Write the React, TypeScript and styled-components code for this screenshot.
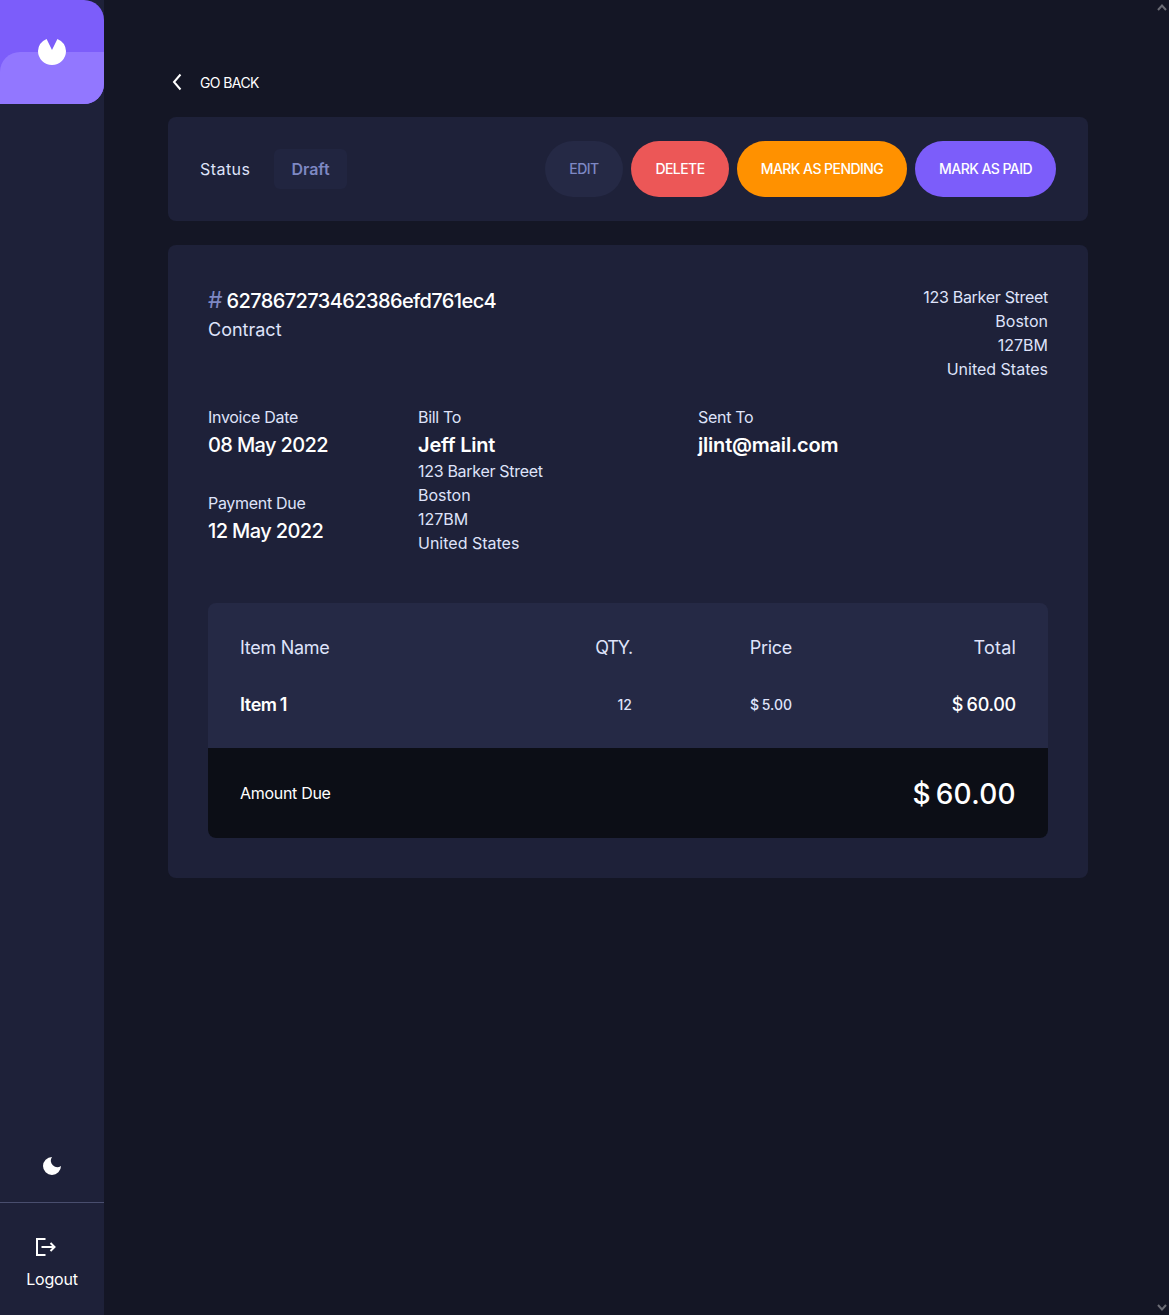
import styled, { createGlobalStyle } from 'styled-components';

const GlobalStyle = createGlobalStyle`
  html, body {
    margin: 0;
    height: 100%;
    background: #141625;
    font-family: 'Inter', 'Noto Sans', sans-serif;
    overflow: hidden;
  }
  * {
    box-sizing: border-box;
  }
`;

const Page = styled.div`
  display: flex;
  height: 1315px;
  width: 100%;
  background: #141625;
`;

const Sidebar = styled.aside`
  width: 104px;
  flex-shrink: 0;
  display: flex;
  flex-direction: column;
  background: #1e2139;
`;

const Logo = styled.div`
  position: relative;
  height: 104px;
  display: flex;
  align-items: center;
  justify-content: center;
  background: #7c5dfa;
  border-radius: 0 20px 20px 0;
  overflow: hidden;

  &::after {
    content: '';
    position: absolute;
    left: 0;
    right: 0;
    bottom: 0;
    height: 52px;
    background: #9277ff;
    border-radius: 20px 0 0 0;
  }

  svg {
    position: relative;
    z-index: 1;
  }
`;

const SidebarBottom = styled.div`
  margin-top: auto;
  display: flex;
  flex-direction: column;
`;

const ThemeButton = styled.div`
  height: 73px;
  display: flex;
  align-items: center;
  justify-content: center;
  padding-bottom: 1px;
  border-bottom: 1px solid #494e6e;
`;

const LogoutButton = styled.div`
  height: 112px;
  display: flex;
  flex-direction: column;
  align-items: center;
  padding-top: 35px;
  color: #fff;
  font-size: 16px;
  letter-spacing: -0.2px;

  svg {
    margin: 0 12px 13px 0;
  }
`;

const Main = styled.main`
  flex: 1;
  padding: 71px 81px 0 64px;
`;

const BackLink = styled.div`
  height: 22px;
  display: flex;
  align-items: center;
  gap: 15px;
  margin-bottom: 24px;
  color: #fff;
  font-size: 14px;
  letter-spacing: -0.6px;

  svg {
    margin-left: 3px;
  }
`;

const Panel = styled.section`
  background: #1e2139;
  border-radius: 8px;
`;

const StatusBar = styled(Panel)`
  height: 104px;
  display: flex;
  align-items: center;
  padding: 0 32px;
  margin-bottom: 24px;
`;

const StatusLabel = styled.span`
  width: 74px;
  color: #dfe3fa;
  font-size: 16px;
  letter-spacing: 0.45px;
`;

const StatusBadge = styled.span`
  width: 73px;
  height: 40px;
  display: flex;
  align-items: center;
  justify-content: center;
  border-radius: 6px;
  background: #212540;
  color: #7e88c3;
  font-size: 16px;
  font-weight: 600;
`;

const Actions = styled.div`
  margin-left: auto;
  display: flex;
  gap: 8px;
`;

const Action = styled.button<{ $bg: string; $fg?: string; $w: number }>`
  width: ${(p) => p.$w}px;
  height: 56px;
  border: 0;
  border-radius: 28px;
  padding: 0 0 1px;
  background: ${(p) => p.$bg};
  color: ${(p) => p.$fg || '#fff'};
  font-family: inherit;
  font-size: 14px;
  font-weight: 500;
  letter-spacing: -0.55px;
`;

const InvoiceCard = styled(Panel)`
  height: 633px;
  padding: 40px;
`;

const TopRow = styled.div`
  display: flex;
  justify-content: space-between;
  margin-bottom: 24px;
`;

const InvoiceId = styled.div`
  color: #fff;
  font-size: 20px;
  line-height: 32px;
  font-weight: 500;
  letter-spacing: -0.6px;

  span {
    display: inline-block;
    width: 18.5px;
    color: #7e88c3;
    font-size: 23px;
    line-height: 1;
    font-weight: 400;
    letter-spacing: 0;
  }
`;

const Muted = styled.div<{ $size?: number }>`
  color: #dfe3fa;
  font-size: ${(p) => p.$size || 16}px;
  line-height: 24px;
  letter-spacing: -0.3px;
`;

const WideLine = styled(Muted)`
  letter-spacing: 0;
`;

const ContractType = styled(Muted)`
  font-size: 18px;
  margin-top: 1px;
  letter-spacing: 0;
`;

const Address = styled.div`
  text-align: right;
`;

const Details = styled.div`
  display: grid;
  grid-template-columns: 210px 280px 1fr;
  height: 198px;
`;

const DetailGroup = styled.div`
  margin-bottom: 32px;
`;

const Strong = styled.div`
  color: #fff;
  font-size: 20px;
  line-height: 30px;
  padding-top: 1px;
  margin-bottom: -1px;
  font-weight: 600;
  letter-spacing: -0.2px;
`;

const DateValue = styled(Strong)`
  font-weight: 500;
  letter-spacing: -0.62px;
`;

const ItemsBox = styled.div`
  border-radius: 8px;
  overflow: hidden;
  background: #252945;
`;

const Items = styled.div`
  display: grid;
  grid-template-columns: 1fr 120px 160px 224px;
  padding: 33px 32px 0;
  height: 145px;
  align-content: start;
`;

const Heading = styled.div<{ $right?: boolean; $ls?: number }>`
  color: #dfe3fa;
  font-size: 18px;
  line-height: 24px;
  letter-spacing: ${(p) => (p.$ls !== undefined ? p.$ls : -0.3)}px;
  text-align: ${(p) => (p.$right ? 'right' : 'left')};
  margin-bottom: 33px;
`;

const Cell = styled.div<{ $size: number; $color?: string; $ls?: number }>`
  color: ${(p) => p.$color || '#dfe3fa'};
  font-size: ${(p) => p.$size}px;
  line-height: 24px;
  font-weight: 500;
  text-align: right;
  letter-spacing: ${(p) => p.$ls || 0}px;
  word-spacing: -1px;
`;

const ItemName = styled(Cell)`
  text-align: left;
  font-weight: 600;
  letter-spacing: -0.4px;
`;

const AmountBar = styled.div`
  height: 90px;
  display: flex;
  align-items: center;
  justify-content: space-between;
  padding: 0 32px;
  background: #0c0e16;
  color: #fff;
`;

const AmountLabel = styled.span`
  font-size: 16px;
  letter-spacing: -0.3px;
`;

const AmountValue = styled.span`
  padding-top: 2px;
  font-size: 28px;
  font-weight: 500;
  letter-spacing: 0.3px;
  word-spacing: -3px;
`;

const ScrollArrow = styled.svg<{ $bottom?: boolean }>`
  position: fixed;
  right: 2px;
  ${(p) => (p.$bottom ? 'bottom: 4px;' : 'top: 4px;')}
`;

const App = () => {
  return (
    <Page>
      <GlobalStyle />
      <Sidebar>
        <Logo>
          <svg width="28" height="26" viewBox="0 0 28 26">
            <path d="M8.6 0.1 L14 11 L19.4 0.1 A14 14 0 0 1 28 12 A14 14 0 0 1 0 12 A14 14 0 0 1 8.6 0.1 Z" fill="#fff" />
          </svg>
        </Logo>
        <SidebarBottom>
          <ThemeButton>
            <svg width="20" height="20" viewBox="0 0 20 20">
              <path d="M10 1A9 9 0 1 0 19 10 6.5 6.5 0 0 1 10 1Z" fill="#fff" />
            </svg>
          </ThemeButton>
          <LogoutButton>
            <svg width="20" height="18" viewBox="0 0 20 18" fill="none" stroke="#fff" strokeWidth="2">
              <path d="M9.5 1H1v16h8.5" />
              <path d="M5.5 9h13M14.5 5l4 4-4 4" />
            </svg>
            Logout
          </LogoutButton>
        </SidebarBottom>
      </Sidebar>
      <Main>
        <BackLink>
          <svg width="14" height="18" viewBox="0 0 14 18" fill="none" stroke="#fff" strokeWidth="2">
            <path d="M9.5 1.5 3 9l6.5 7.5" />
          </svg>
          GO BACK
        </BackLink>
        <StatusBar>
          <StatusLabel>Status</StatusLabel>
          <StatusBadge>Draft</StatusBadge>
          <Actions>
            <Action $bg="#252945" $fg="#7e88c3" $w={78}>EDIT</Action>
            <Action $bg="#ec5757" $w={98}>DELETE</Action>
            <Action $bg="#ff9100" $w={170}>MARK AS PENDING</Action>
            <Action $bg="#7c5dfa" $w={141}>MARK AS PAID</Action>
          </Actions>
        </StatusBar>
        <InvoiceCard>
          <TopRow>
            <div>
              <InvoiceId>
                <span>#</span>627867273462386efd761ec4
              </InvoiceId>
              <ContractType>Contract</ContractType>
            </div>
            <Address>
              <Muted>123 Barker Street</Muted>
              <WideLine>Boston</WideLine>
              <WideLine>127BM</WideLine>
              <WideLine>United States</WideLine>
            </Address>
          </TopRow>
          <Details>
            <div>
              <DetailGroup>
                <Muted>Invoice Date</Muted>
                <DateValue>08 May 2022</DateValue>
              </DetailGroup>
              <DetailGroup>
                <Muted>Payment Due</Muted>
                <DateValue>12 May 2022</DateValue>
              </DetailGroup>
            </div>
            <div>
              <Muted>Bill To</Muted>
              <Strong>Jeff Lint</Strong>
              <Muted>123 Barker Street</Muted>
              <WideLine>Boston</WideLine>
              <WideLine>127BM</WideLine>
              <WideLine>United States</WideLine>
            </div>
            <div>
              <Muted>Sent To</Muted>
              <Strong>jlint@mail.com</Strong>
            </div>
          </Details>
          <ItemsBox>
            <Items>
              <Heading>Item Name</Heading>
              <Heading $right $ls={-1.3}>QTY.</Heading>
              <Heading $right>Price</Heading>
              <Heading $right $ls={0.2}>Total</Heading>
              <ItemName $size={18} $color="#fff">Item 1</ItemName>
              <Cell $size={14}>12</Cell>
              <Cell $size={14}>$ 5.00</Cell>
              <Cell $size={18} $color="#fff" $ls={-0.25}>$ 60.00</Cell>
            </Items>
            <AmountBar>
              <AmountLabel>Amount Due</AmountLabel>
              <AmountValue>$ 60.00</AmountValue>
            </AmountBar>
          </ItemsBox>
        </InvoiceCard>
      </Main>
      <ScrollArrow width="10" height="7" viewBox="0 0 10 7">
        <path d="M1 6 5 1.5 9 6" fill="none" stroke="#6b6c75" strokeWidth="2" />
      </ScrollArrow>
      <ScrollArrow $bottom width="10" height="7" viewBox="0 0 10 7">
        <path d="M1 1 5 5.5 9 1" fill="none" stroke="#6b6c75" strokeWidth="2" />
      </ScrollArrow>
    </Page>
  );
};

export default App;
